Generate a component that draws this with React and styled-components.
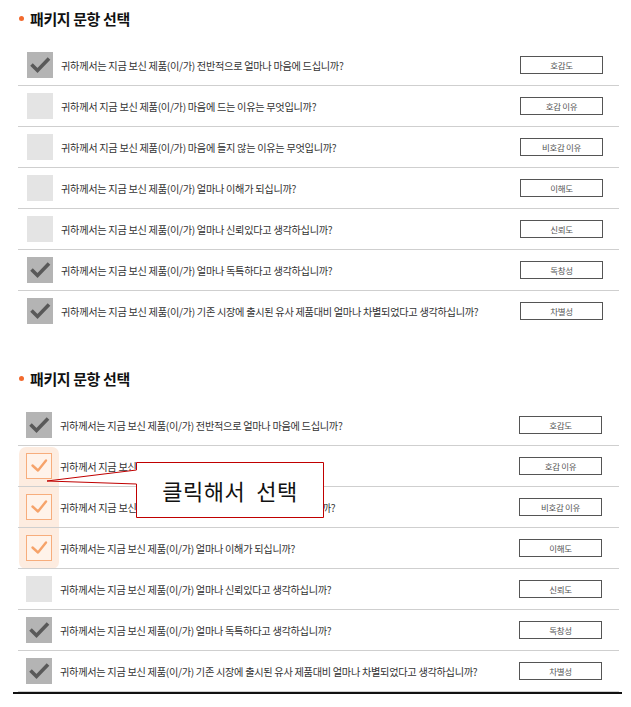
import React from 'react'
import styled, { createGlobalStyle } from 'styled-components'

const questions = [
  { text: '귀하께서는 지금 보신 제품(이/가) 전반적으로 얼마나 마음에 드십니까?', label: '호감도' },
  { text: '귀하께서 지금 보신 제품(이/가) 마음에 드는 이유는 무엇입니까?', label: '호감 이유' },
  { text: '귀하께서 지금 보신 제품(이/가) 마음에 들지 않는 이유는 무엇입니까?', label: '비호감 이유' },
  { text: '귀하께서는 지금 보신 제품(이/가) 얼마나 이해가 되십니까?', label: '이해도' },
  { text: '귀하께서는 지금 보신 제품(이/가) 얼마나 신뢰있다고 생각하십니까?', label: '신뢰도' },
  { text: '귀하께서는 지금 보신 제품(이/가) 얼마나 독특하다고 생각하십니까?', label: '독창성' },
  { text: '귀하께서는 지금 보신 제품(이/가) 기존 시장에 출시된 유사 제품대비 얼마나 차별되었다고 생각하십니까?', label: '차별성' },
]

const firstStates = ['checked', 'empty', 'empty', 'empty', 'empty', 'checked', 'checked']
const secondStates = ['checked', 'picked', 'picked', 'picked', 'empty', 'checked', 'checked']

const CheckMark = ({ state }) => {
  if (state === 'empty') return null
  if (state === 'picked') {
    return (
      <svg width="26" height="26" viewBox="0 0 26 26">
        <path d="M6.5 12.5 L12 17.5 L20 7.5" fill="none" stroke="#f6a36a" strokeWidth="2.4" strokeLinecap="round" strokeLinejoin="round" />
      </svg>
    )
  }
  return (
    <svg width="26" height="26" viewBox="0 0 26 26">
      <path d="M4.5 12.5 L10.5 18.5 L22 6.5" fill="none" stroke="#595959" strokeWidth="3.6" strokeLinejoin="miter" />
    </svg>
  )
}

const Section = ({ states, last, highlight }) => (
  <Block>
    <Title>패키지 문항 선택</Title>
    <List $last={last}>
      {highlight && <Highlight />}
      {questions.map((q, i) => (
        <Row key={q.label} $last={last}>
          <Box $state={states[i]}>
            <CheckMark state={states[i]} />
          </Box>
          <Question>{q.text}</Question>
          <Tag>{q.label}</Tag>
        </Row>
      ))}
      {highlight && (
        <Callout>
          <svg width="290" height="70" viewBox="0 0 290 70">
            <path
              d="M96.5 7.5 H283.5 V62.5 H96.5 V29 L7 26 L96.5 15 Z"
              fill="#fff"
              stroke="#c00000"
              strokeWidth="1"
            />
          </svg>
          <CalloutText>클릭해서&nbsp;&nbsp;선택</CalloutText>
        </Callout>
      )}
    </List>
  </Block>
)

export default function App() {
  return (
    <>
      <GlobalStyle />
      <Page>
        <Section states={firstStates} />
        <Section states={secondStates} last highlight />
      </Page>
    </>
  )
}

const GlobalStyle = createGlobalStyle`
  body {
    margin: 0;
    background: #fff;
    font-family: "Noto Sans CJK KR", "Noto Sans", sans-serif;
  }
`

const Page = styled.div`
  width: 631px;
  height: 707px;
  padding-top: 8px;
  box-sizing: border-box;
  display: flex;
  flex-direction: column;
  gap: 37px;
`

const Block = styled.section`
  display: flex;
  flex-direction: column;
  gap: 17px;
`

const Title = styled.h2`
  margin: 0 0 0 19px;
  height: 20px;
  display: flex;
  align-items: center;
  gap: 6px;
  font-size: 15px;
  font-weight: 700;
  letter-spacing: -0.4px;
  color: #111;

  &::before {
    content: '';
    width: 5px;
    height: 5px;
    border-radius: 50%;
    background: #f26a2e;
  }
`

const List = styled.div`
  position: relative;
  margin: ${(p) => (p.$last ? '0 9px 0 13px' : '0 12px 0 18px')};
  padding: ${(p) => (p.$last ? '0 3px 0 5px' : '0')};
  border-bottom: ${(p) => (p.$last ? '2px solid #111' : 'none')};
`

const Row = styled.div`
  position: relative;
  z-index: 1;
  height: 40px;
  display: flex;
  align-items: center;
  padding: 0 ${(p) => (p.$last ? '17px 0 8px' : '16px 0 9px')};
  border-bottom: 1px solid #cfcfcf;

  &:last-child {
    border-bottom: none;
  }
`

const Box = styled.div`
  width: 26px;
  height: 26px;
  flex: none;
  box-sizing: border-box;
  background: ${(p) => (p.$state === 'checked' ? '#b4b4b4' : p.$state === 'picked' ? '#fff3ea' : '#e4e4e4')};
  border: ${(p) => (p.$state === 'picked' ? '1px solid #f7ad7c' : 'none')};
  display: flex;
  align-items: center;
  justify-content: center;

  svg {
    flex: none;
  }
`

const Question = styled.span`
  flex: 1;
  margin-left: 8px;
  font-size: 10.2px;
  letter-spacing: -0.3px;
  color: #333;
  white-space: nowrap;
`

const Tag = styled.div`
  width: 83px;
  height: 18px;
  box-sizing: border-box;
  border: 1px solid #555;
  display: flex;
  align-items: center;
  justify-content: center;
  font-size: 8.5px;
  letter-spacing: -0.3px;
  color: #555;
`

const Highlight = styled.div`
  position: absolute;
  z-index: 0;
  left: 6px;
  top: 42px;
  width: 40px;
  height: 122px;
  border-radius: 7px;
  background: #fdece0;
`

const Callout = styled.div`
  position: absolute;
  z-index: 2;
  left: 27px;
  top: 50px;
  width: 290px;
  height: 70px;

  svg {
    position: absolute;
    left: 0;
    top: 0;
  }
`

const CalloutText = styled.div`
  position: absolute;
  left: 96px;
  top: 7px;
  width: 188px;
  height: 56px;
  display: flex;
  align-items: center;
  justify-content: center;
  font-size: 22px;
  color: #111;
  letter-spacing: 0.5px;
`
